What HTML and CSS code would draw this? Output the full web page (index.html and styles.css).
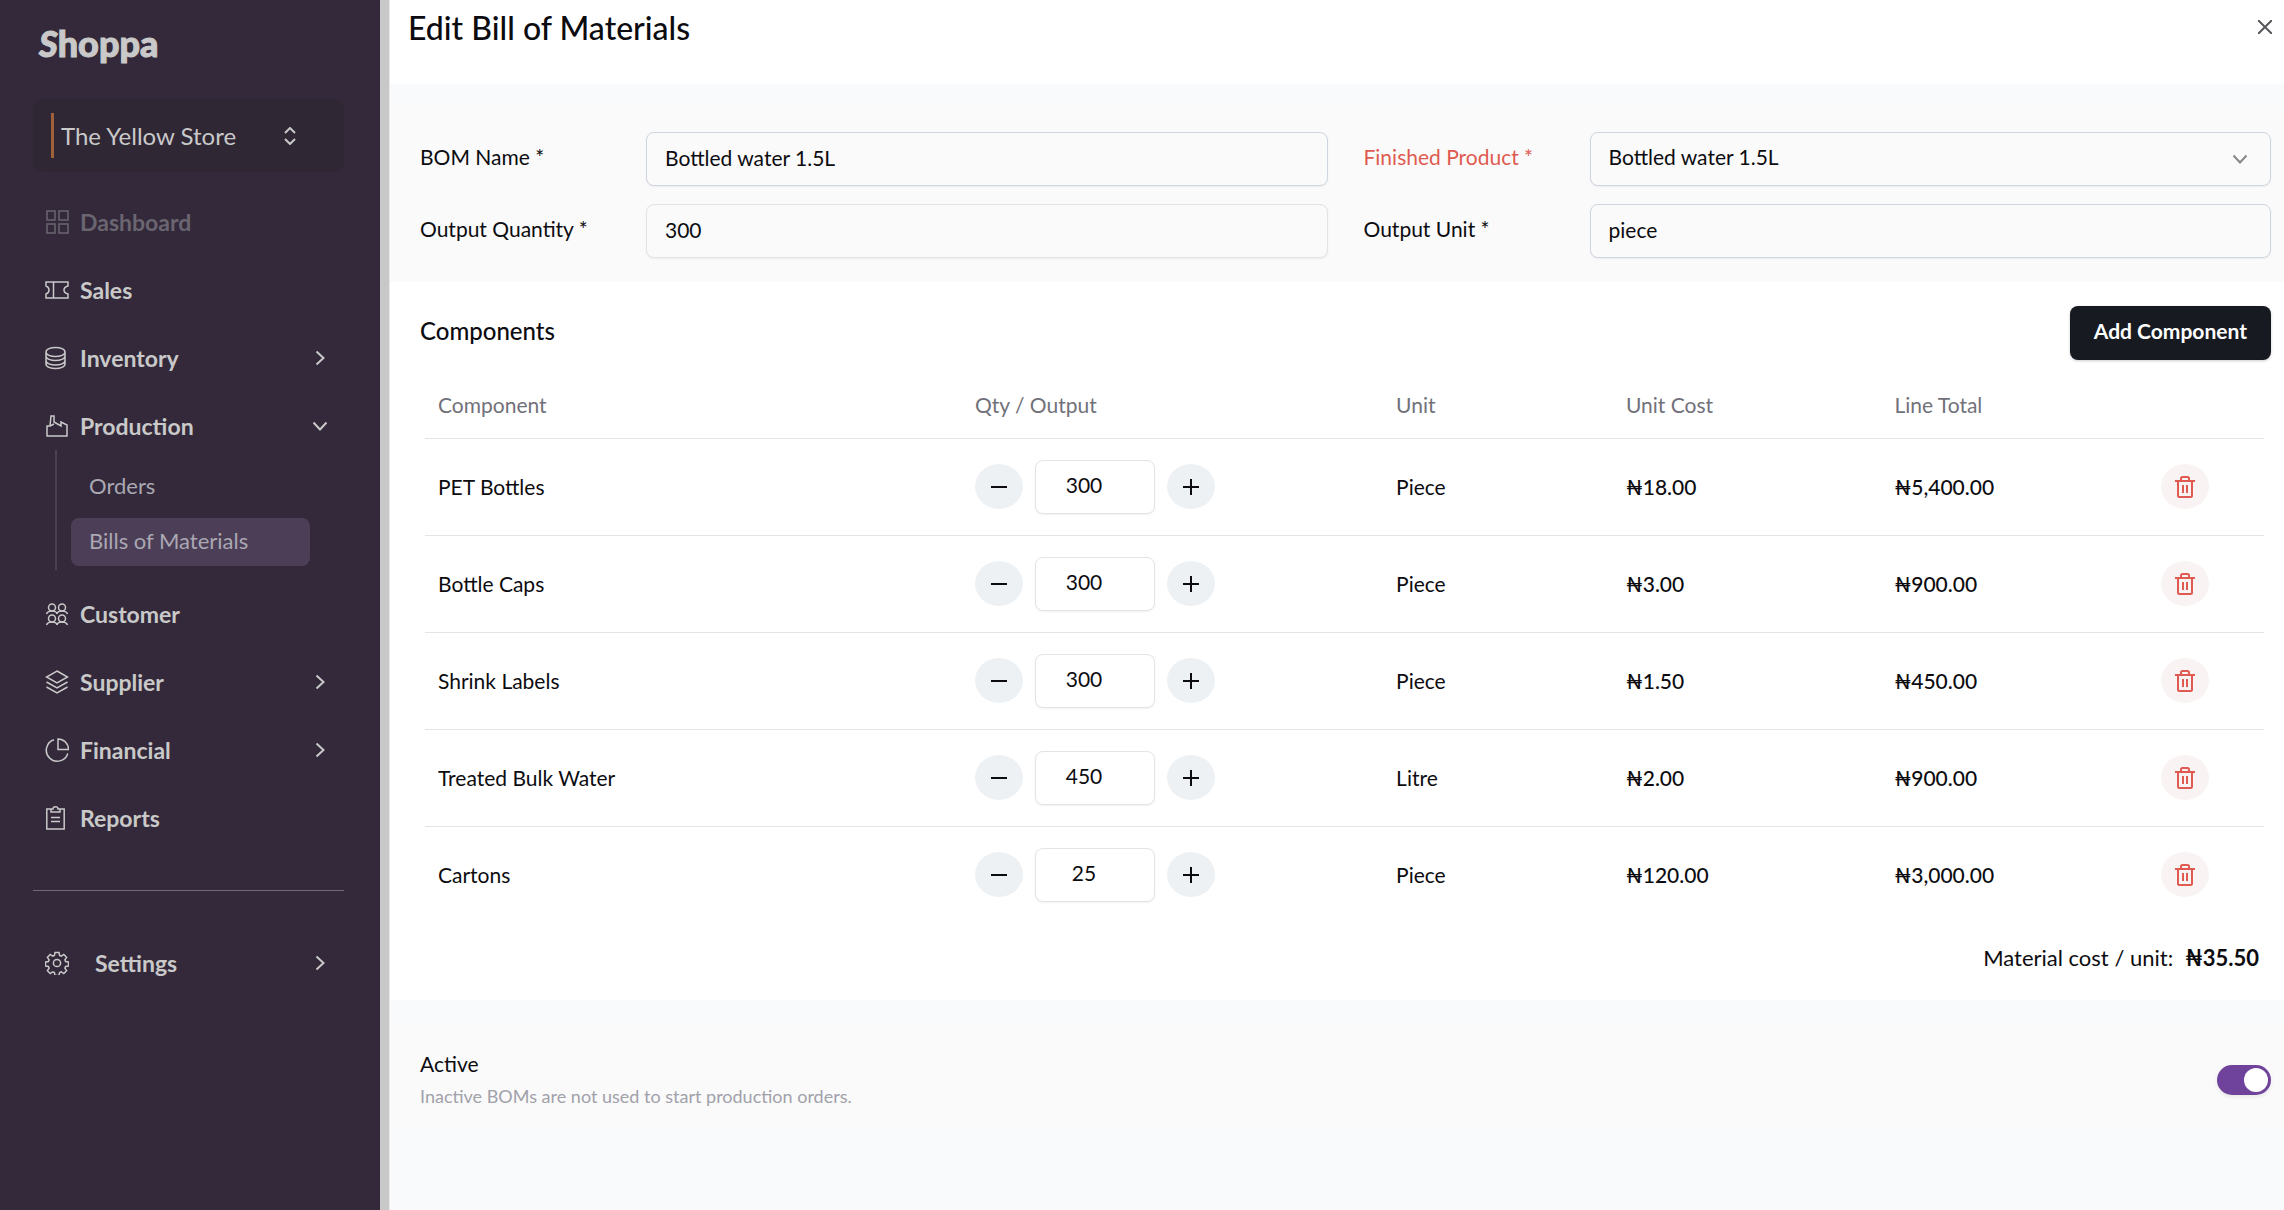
FILE: index.html
```html
<!DOCTYPE html>
<html lang="en">
<head>
  <meta charset="UTF-8">
  <meta name="viewport" content="width=device-width, initial-scale=1.0">
  <title>Edit Bill of Materials - Shoppa</title>
  <link rel="stylesheet" href="styles.css">
</head>
<body>
  <!-- Shared icons -->
  <svg class="sprite" aria-hidden="true">
    <symbol id="chevron" viewBox="0 0 16 16"><path d="M4.5 1.5 11.5 8l-7 6.5"/></symbol>
    <symbol id="minus" viewBox="0 0 16 16"><path d="M0 8h16"/></symbol>
    <symbol id="plus" viewBox="0 0 16 16"><path d="M0 8h16M8 0v16"/></symbol>
    <symbol id="trash" viewBox="0 0 20 22"><path d="M0 5h20M3 5v14.500q0 1.500 1.500 1.500h11q1.500 0 1.500-1.500V5M6 5V2.500Q6 1 7.500 1h5Q14 1 14 2.500V5M8 9v8M12 9v8"/></symbol>
  </svg>

  <aside class="sidebar">
    <div class="logo"><span class="logo-s">S</span>hoppa</div>

    <button class="store" type="button">
      <span class="store-bar"></span>
      <span>The Yellow Store</span>
      <svg class="store-arrows" viewBox="0 0 12 18"><path d="M1 6l5-5 5 5M1 12l5 5 5-5"/></svg>
    </button>

    <nav class="menu">
      <a class="menu-item disabled" href="#">
        <svg class="icon" viewBox="0 0 24 24"><path d="M2 1h8v9H2zM14 1h9v9h-9zM2 14h8v9H2zM14 14h9v9h-9z"/></svg>
        Dashboard
      </a>
      <a class="menu-item" href="#">
        <svg class="icon" viewBox="0 0 24 24"><path d="M1 4h22v4q-4 1-4 4t4 4v4H1v-4q3-1 3-4T1 8zM8.500 4v16"/></svg>
        Sales
      </a>
      <a class="menu-item" href="#">
        <svg class="icon" viewBox="0 0 24 24"><path d="M1 6c0-6 19-6 19 0s-19 6-19 0v12c0 6 19 6 19 0V6M1 10c0 6 19 6 19 0M1 14.500c0 6 19 6 19 0"/></svg>
        Inventory
        <svg class="arrow"><use href="#chevron"/></svg>
      </a>
      <a class="menu-item" href="#">
        <svg class="icon" viewBox="0 0 24 24"><path d="M2 22h20V11l-6-3v4L9 8V2H6L5 12H2zM5 12l4-2"/></svg>
        Production
        <svg class="arrow open"><use href="#chevron"/></svg>
      </a>
      <div class="submenu">
        <a class="submenu-item" href="#">Orders</a>
        <a class="submenu-item active" href="#">Bills of Materials</a>
      </div>
      <a class="menu-item" href="#">
        <svg class="icon" viewBox="0 0 24 24"><circle cx="7" cy="5.500" r="3.500"/><circle cx="17" cy="5.500" r="3.500"/><circle cx="7" cy="16.500" r="3.500"/><circle cx="17" cy="16.500" r="3.500"/><path d="M1.500 12q1-3 5.500-3t5 3q.5-3 5-3t5.500 3M1.500 23q1-3 5.500-3t5 3q.5-3 5-3t5.500 3"/></svg>
        Customer
      </a>
      <a class="menu-item" href="#">
        <svg class="icon" viewBox="0 0 24 24"><path d="M12 1l10.500 6L12 13 1.500 7zM1.500 12L12 18l10.500-6M1.500 17L12 23l10.500-6"/></svg>
        Supplier
        <svg class="arrow"><use href="#chevron"/></svg>
      </a>
      <a class="menu-item" href="#">
        <svg class="icon" viewBox="0 0 24 24"><path d="M13 1v10.500h10.500A10.500 10.500 0 0 0 13 1zM9 1.700A11 11 0 1 0 22.800 15.500"/></svg>
        Financial
        <svg class="arrow"><use href="#chevron"/></svg>
      </a>
      <a class="menu-item" href="#">
        <svg class="icon" viewBox="0 0 24 24"><path d="M6 3H1.800v20h17.400V3H15M6 6V3h2q0-2.200 2.500-2.200T13 3h2v3zM6 11.500h9M6 15.500h9"/></svg>
        Reports
      </a>
    </nav>

    <hr class="divider">

    <a class="menu-item settings" href="#">
      <svg class="icon" viewBox="0 0 24 24"><circle cx="12" cy="12" r="3.600"/><path d="M10 1.500h4l.6 3 1.700.7 2.500-1.700 2.800 2.800-1.700 2.500.7 1.700 2.900.5v4l-2.900.5-.7 1.700 1.700 2.500-2.800 2.800-2.500-1.700-1.700.7-.6 3h-4l-.6-3-1.700-.7-2.500 1.700-2.800-2.800 1.700-2.500-.7-1.700-2.900-.5v-4l2.900-.5.7-1.700-1.700-2.500 2.800-2.800 2.500 1.700 1.700-.7z"/></svg>
      Settings
      <svg class="arrow"><use href="#chevron"/></svg>
    </a>
  </aside>

  <div class="overlay"></div>

  <main class="drawer">
    <header class="drawer-header">
      <h1>Edit Bill of Materials</h1>
      <button class="close" type="button" aria-label="Close">
        <svg viewBox="0 0 14 14"><path d="M0 0l14 14M14 0L0 14"/></svg>
      </button>
    </header>

    <section class="details">
      <div class="field">
        <label for="bom-name">BOM Name *</label>
        <input id="bom-name" type="text" value="Bottled water 1.5L">
      </div>
      <div class="field error">
        <label for="product">Finished Product *</label>
        <div class="select-box">
          <select id="product">
            <option>Bottled water 1.5L</option>
          </select>
          <svg class="select-arrow"><use href="#chevron"/></svg>
        </div>
      </div>
      <div class="field light">
        <label for="quantity">Output Quantity *</label>
        <input id="quantity" type="text" value="300">
      </div>
      <div class="field">
        <label for="unit">Output Unit *</label>
        <input id="unit" type="text" value="piece">
      </div>
    </section>

    <section class="components">
      <div class="components-header">
        <h2>Components</h2>
        <button class="add" type="button">Add Component</button>
      </div>

      <table>
        <thead>
          <tr>
            <th class="col-name">Component</th>
            <th class="col-qty">Qty / Output</th>
            <th class="col-unit">Unit</th>
            <th class="col-cost">Unit Cost</th>
            <th class="col-total">Line Total</th>
            <th></th>
          </tr>
        </thead>
        <tbody>
          <tr>
            <td>PET Bottles</td>
            <td>
              <div class="stepper">
                <button type="button" aria-label="Decrease"><svg><use href="#minus"/></svg></button>
                <input type="text" value="300" aria-label="PET Bottles quantity">
                <button type="button" aria-label="Increase"><svg><use href="#plus"/></svg></button>
              </div>
            </td>
            <td>Piece</td>
            <td class="money">₦18.00</td>
            <td class="money">₦5,400.00</td>
            <td><button class="delete" type="button" aria-label="Delete"><svg><use href="#trash"/></svg></button></td>
          </tr>
          <tr>
            <td>Bottle Caps</td>
            <td>
              <div class="stepper">
                <button type="button" aria-label="Decrease"><svg><use href="#minus"/></svg></button>
                <input type="text" value="300" aria-label="Bottle Caps quantity">
                <button type="button" aria-label="Increase"><svg><use href="#plus"/></svg></button>
              </div>
            </td>
            <td>Piece</td>
            <td class="money">₦3.00</td>
            <td class="money">₦900.00</td>
            <td><button class="delete" type="button" aria-label="Delete"><svg><use href="#trash"/></svg></button></td>
          </tr>
          <tr>
            <td>Shrink Labels</td>
            <td>
              <div class="stepper">
                <button type="button" aria-label="Decrease"><svg><use href="#minus"/></svg></button>
                <input type="text" value="300" aria-label="Shrink Labels quantity">
                <button type="button" aria-label="Increase"><svg><use href="#plus"/></svg></button>
              </div>
            </td>
            <td>Piece</td>
            <td class="money">₦1.50</td>
            <td class="money">₦450.00</td>
            <td><button class="delete" type="button" aria-label="Delete"><svg><use href="#trash"/></svg></button></td>
          </tr>
          <tr>
            <td>Treated Bulk Water</td>
            <td>
              <div class="stepper">
                <button type="button" aria-label="Decrease"><svg><use href="#minus"/></svg></button>
                <input type="text" value="450" aria-label="Treated Bulk Water quantity">
                <button type="button" aria-label="Increase"><svg><use href="#plus"/></svg></button>
              </div>
            </td>
            <td>Litre</td>
            <td class="money">₦2.00</td>
            <td class="money">₦900.00</td>
            <td><button class="delete" type="button" aria-label="Delete"><svg><use href="#trash"/></svg></button></td>
          </tr>
          <tr>
            <td>Cartons</td>
            <td>
              <div class="stepper">
                <button type="button" aria-label="Decrease"><svg><use href="#minus"/></svg></button>
                <input type="text" value="25" aria-label="Cartons quantity">
                <button type="button" aria-label="Increase"><svg><use href="#plus"/></svg></button>
              </div>
            </td>
            <td>Piece</td>
            <td class="money">₦120.00</td>
            <td class="money">₦3,000.00</td>
            <td><button class="delete" type="button" aria-label="Delete"><svg><use href="#trash"/></svg></button></td>
          </tr>
        </tbody>
      </table>

      <p class="summary">Material cost / unit: <strong>₦35.50</strong></p>
    </section>

    <section class="status">
      <div>
        <label for="active">Active</label>
        <p>Inactive BOMs are not used to start production orders.</p>
      </div>
      <input class="toggle" id="active" type="checkbox" checked>
    </section>
  </main>
</body>
</html>
```

FILE: styles.css
```css
* {
  box-sizing: border-box;
}
body {
  display: flex;
  min-height: 100vh;
  margin: 0;
  background: #f9fafc;
  color: #0c0c10;
  font-family: Lato, sans-serif;
  font-size: 21px;
  line-height: 24px;
}
button,
input,
select {
  color: inherit;
  font: inherit;
}
button {
  border: none;
  cursor: pointer;
}
h1,
h2,
p {
  margin: 0;
}
svg {
  fill: none;
  stroke: currentColor;
  stroke-width: 2;
}
.sprite {
  position: absolute;
  width: 0;
  height: 0;
}

/* Sidebar */
.sidebar {
  width: 380px;
  flex-shrink: 0;
  padding: 24px 36px 24px 33px;
  background: #33293a;
  color: #c9c9c9;
}
.logo {
  height: 75px;
  padding-left: 6px;
  font-size: 36px;
  font-weight: 900;
  line-height: 38px;
  -webkit-text-stroke: 1px currentColor;
}
.logo-s {
  font-style: italic;
}
.store {
  display: flex;
  align-items: center;
  gap: 7px;
  width: 100%;
  height: 73px;
  padding: 0 48px 0 18px;
  border-radius: 10px;
  background: #302735;
  font-size: 24px;
}
.store-bar {
  width: 3px;
  height: 45px;
  background: #a0603c;
}
.store-arrows {
  width: 12px;
  height: 18px;
  margin-left: auto;
}
.menu {
  display: flex;
  flex-direction: column;
  gap: 20px;
  margin-top: 26px;
}
.menu-item {
  display: flex;
  align-items: center;
  gap: 11px;
  height: 48px;
  padding: 0 16px 0 12px;
  color: #c9c9c9;
  font-size: 23px;
  font-weight: 700;
  text-decoration: none;
}
.menu-item.disabled {
  color: #6a6570;
}
.menu-item.settings {
  gap: 26px;
}
.icon {
  width: 24px;
  height: 24px;
  stroke-width: 1.5;
}
.arrow {
  width: 16px;
  height: 16px;
  margin-left: auto;
}
.arrow.open {
  transform: rotate(90deg);
}
.submenu {
  display: flex;
  flex-direction: column;
  gap: 7px;
  margin: -20px 34px 0 22px;
  padding: 13px 0 4px 14px;
  border-left: 2px solid #4c3e56;
}
.submenu-item {
  height: 48px;
  padding: 0 18px;
  border-radius: 8px;
  color: #a9a8b3;
  font-size: 22px;
  line-height: 45px;
  text-decoration: none;
}
.submenu-item.active {
  background: #4c3e56;
}
.divider {
  height: 1px;
  margin: 48px 0;
  border: none;
  background: #726a78;
}
.overlay {
  width: 10px;
  flex-shrink: 0;
  border-right: 1px solid #e8e8e8;
  background: #c8c8c8;
}

/* Drawer */
.drawer {
  flex: 1;
}
.drawer-header {
  display: flex;
  align-items: flex-start;
  justify-content: space-between;
  height: 84px;
  padding: 10px 12px 0 18px;
  background: #fff;
}
.drawer-header h1 {
  font-size: 32px;
  font-weight: 500;
  line-height: 36px;
}
.close {
  width: 14px;
  height: 34px;
  padding: 0;
  background: none;
  color: #55565a;
}
.close svg {
  display: block;
  width: 14px;
  height: 14px;
}

.details {
  display: grid;
  grid-template-columns: 1fr 1fr;
  gap: 18px 36px;
  padding: 48px 13px 24px 30px;
  background: linear-gradient(#f9fafc 22px, #fafafa 22px);
}
.field {
  display: grid;
  grid-template-columns: 226px 1fr;
  align-items: center;
}
.field label {
  padding-bottom: 4px;
}
.field.error label {
  color: #df5a50;
}
.field input,
.field select {
  width: 100%;
  height: 54px;
  padding: 0 18px 4px;
  border: 1px solid #cfd6e0;
  border-radius: 8px;
  background: #fafafa;
  box-shadow: 0 1px 2px rgba(0, 0, 0, 0.06);
}
.field.light input {
  border-color: #e3e3e6;
}
.field select {
  appearance: none;
}
.select-box {
  position: relative;
}
.select-arrow {
  position: absolute;
  top: 19px;
  right: 23px;
  width: 16px;
  height: 16px;
  color: #85868a;
  transform: rotate(90deg);
  pointer-events: none;
}

/* Components table */
.components {
  padding: 24px 13px 24px 30px;
  background: #fff;
}
.components-header {
  display: flex;
  justify-content: space-between;
}
.components-header h2 {
  font-size: 24px;
  font-weight: 500;
  line-height: 50px;
}
.add {
  height: 54px;
  padding: 0 24px 4px;
  border-radius: 8px;
  background: #171a21;
  box-shadow: 0 1px 3px rgba(0, 0, 0, 0.2);
  color: #fff;
  font-weight: 700;
}
table {
  width: calc(100% - 12px);
  margin: 12px 7px 0 5px;
  border-collapse: collapse;
  table-layout: fixed;
}
th {
  height: 66px;
  padding: 0 13px;
  border-bottom: 1px solid #e4e4e7;
  color: #71717a;
  font-weight: 400;
  text-align: left;
}
td {
  height: 97px;
  padding: 0 13px;
  border-bottom: 1px solid #e4e4e7;
}
tr:last-child td {
  border-bottom: none;
}
.col-name {
  width: 29.2%;
}
.col-qty {
  width: 22.9%;
}
.col-unit {
  width: 12.5%;
}
.col-cost {
  width: 14.6%;
}
.col-total {
  width: 14.5%;
}
.money {
  font-weight: 500;
}
.stepper {
  display: flex;
  align-items: center;
  gap: 12px;
}
.stepper button,
.delete {
  display: flex;
  align-items: center;
  justify-content: center;
  width: 48px;
  height: 45px;
  padding: 0;
  border-radius: 50%;
  background: #eef1f4;
}
.stepper svg {
  width: 16px;
  height: 16px;
}
.stepper input {
  width: 120px;
  height: 54px;
  padding: 0 34px 4px 12px;
  border: 1px solid #e4e4e7;
  border-radius: 8px;
  background: #fff;
  box-shadow: 0 1px 2px rgba(0, 0, 0, 0.06);
  text-align: center;
}
td .delete {
  background: #faf3f3;
  color: #df5a50;
}
.delete svg {
  width: 20px;
  height: 22px;
}
.summary {
  display: flex;
  justify-content: flex-end;
  gap: 12px;
  margin: 23px 12px 6px 0;
  font-size: 22px;
}

/* Active switch */
.status {
  display: flex;
  align-items: center;
  justify-content: space-between;
  padding: 48px 13px 40px 30px;
  background: linear-gradient(#f9fafc 22px, #fafafa 22px, #fafafa 128px, #f9fafc 128px);
}
.status label {
  display: block;
  line-height: 32px;
}
.status p {
  color: #a1a1aa;
  font-size: 18px;
  line-height: 32px;
}
.toggle {
  width: 54px;
  height: 30px;
  margin: 0;
  padding: 3px;
  border-radius: 15px;
  background: #6f429c;
  box-shadow: 0 2px 4px rgba(0, 0, 0, 0.08);
  appearance: none;
  cursor: pointer;
}
.toggle::before {
  content: "";
  display: block;
  width: 24px;
  height: 24px;
  border-radius: 50%;
  background: #fff;
}
.toggle:checked::before {
  margin-left: auto;
}
```
